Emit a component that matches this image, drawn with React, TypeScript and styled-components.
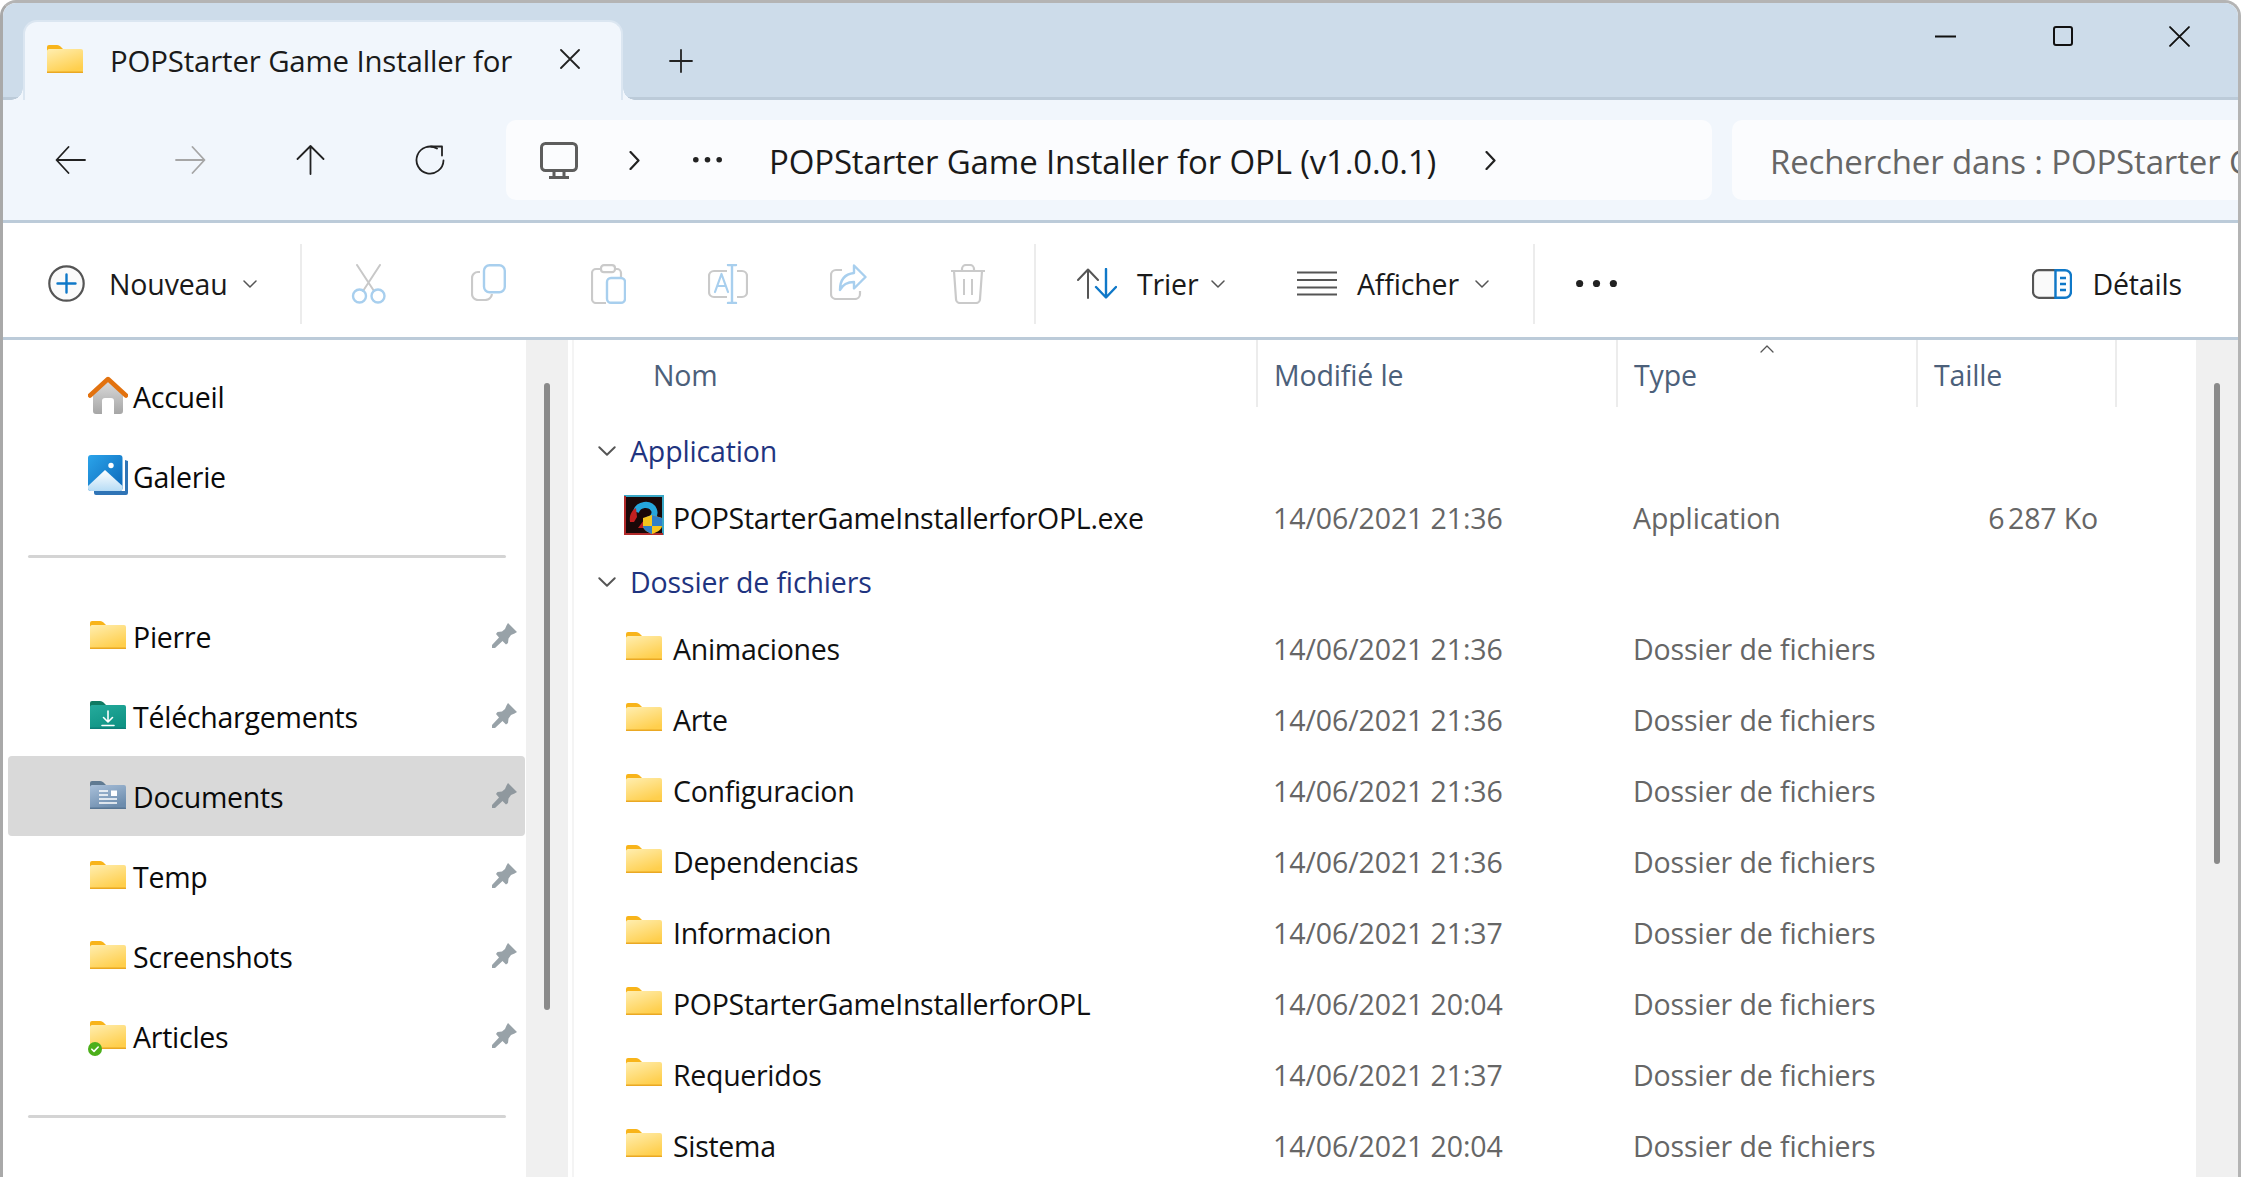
import { useId } from "react";
import styled, { createGlobalStyle } from "styled-components";

const GlobalStyle = createGlobalStyle`
  html, body {
    margin: 0;
    height: 100%;
    overflow: hidden;
    background: #fff;
  }
  body {
    font-family: "Open Sans", "Noto Sans", "Liberation Sans", sans-serif;
    font-size: 28.5px;
    letter-spacing: -0.15px;
    color: #111;
  }
  svg { display: block; flex-shrink: 0; }
`;

const Window = styled.div`
  position: relative;
  box-sizing: border-box;
  height: 100vh;
  display: flex;
  flex-direction: column;
  overflow: hidden;
  border: 3px solid #b4b4b4;
  border-bottom: none;
  border-left-color: #a9a9a9;
  border-radius: 16px 16px 0 0;
`;
const TopAccent = styled.div`
  position: absolute;
  top: -3px;
  left: 30px;
  width: 264px;
  height: 3px;
  background: #9e9e9e;
`;
const TitleBar = styled.div`
  box-sizing: border-box;
  flex: none;
  height: 97px;
  display: flex;
  align-items: flex-end;
  padding-left: 20px;
  background: #cddcea;
  border-bottom: 3px solid #bccbd9;
`;
const Tab = styled.div`
  position: relative;
  box-sizing: border-box;
  width: 600px;
  height: 80px;
  margin-bottom: -3px;
  display: flex;
  align-items: center;
  padding-left: 22px;
  background: #f1f6fc;
  border: 2px solid #dbe6f1;
  border-bottom: none;
  border-radius: 14px 14px 0 0;
  &::before,
  &::after {
    content: "";
    position: absolute;
    bottom: 0;
    width: 12px;
    height: 12px;
  }
  &::before {
    left: -14px;
    background: radial-gradient(circle at 0 0, transparent 11.5px, #f1f6fc 12px);
  }
  &::after {
    right: -14px;
    background: radial-gradient(circle at 100% 0, transparent 11.5px, #f1f6fc 12px);
  }
`;
const TabFolder = styled.div`
  margin-bottom: 4px;
`;
const TabTitle = styled.span`
  margin-left: 27px;
  width: 430px;
  font-size: 29.4px;
  white-space: nowrap;
  overflow: hidden;
  color: #1a1a1a;
`;
const TabClose = styled.span`
  margin-left: 20px;
  margin-top: -4px;
`;
const NewTab = styled.div`
  margin: 0 0 24px 46px;
`;
const WindowControls = styled.div`
  margin-left: auto;
  align-self: flex-start;
  display: flex;
  height: 66px;
  align-items: center;
`;
const ControlSlot = styled.div`
  width: 117px;
  display: flex;
  justify-content: center;
`;

const NavBar = styled.div`
  box-sizing: border-box;
  flex: none;
  height: 123px;
  display: flex;
  align-items: center;
  padding-left: 7px;
  background: #f1f6fc;
  border-bottom: 3px solid #bccbd9;
`;
const NavButton = styled.div`
  width: 120px;
  display: flex;
  justify-content: center;
`;
const AddressBox = styled.div`
  box-sizing: border-box;
  width: 1206px;
  height: 80px;
  margin-left: 16px;
  display: flex;
  align-items: center;
  padding-left: 34px;
  background: #fbfcfe;
  border-radius: 10px;
`;
const CrumbChevron = styled.div`
  margin: 0 53px 0 51px;
`;
const PathText = styled.span`
  margin-left: 47px;
  width: 716px;
  font-size: 33px;
  padding-top: 2px;
  white-space: nowrap;
  color: #1a1a1a;
`;
const SearchBox = styled.div`
  flex: 1;
  min-width: 0;
  height: 80px;
  margin-left: 20px;
  display: flex;
  align-items: center;
  padding: 2px 0 0 38px;
  box-sizing: border-box;
  font-size: 33px;
  overflow: hidden;
  white-space: nowrap;
  color: #666;
  background: #fbfcfe;
  border-radius: 10px 0 0 10px;
`;

const Toolbar = styled.div`
  box-sizing: border-box;
  flex: none;
  height: 117px;
  display: flex;
  align-items: center;
  padding: 7px 56px 0 45px;
  background: #fff;
  border-bottom: 3px solid #bccbd9;
`;
const ToolButton = styled.div<{ $w: number; $gap: number; $ml?: number }>`
  width: ${(p) => p.$w}px;
  margin-left: ${(p) => p.$ml ?? 0}px;
  display: flex;
  align-items: center;
  gap: ${(p) => p.$gap}px;
  color: #1a1a1a;
`;
const ToolLabel = styled.span<{ $w: number }>`
  width: ${(p) => p.$w}px;
  white-space: nowrap;
`;
const ToolDivider = styled.div<{ $ml?: number }>`
  flex: none;
  width: 2px;
  height: 80px;
  margin-left: ${(p) => p.$ml ?? 0}px;
  background: #ececec;
`;
const IconGroup = styled.div`
  display: flex;
  margin: 0 6px;
`;
const IconButton = styled.div`
  width: 120px;
  display: flex;
  justify-content: center;
`;
const MoreDots = styled.div`
  margin-left: 41px;
`;
const DetailsButton = styled.div`
  margin-left: auto;
  display: flex;
  align-items: center;
  gap: 20px;
  color: #1a1a1a;
`;

const Body = styled.div`
  flex: 1;
  min-height: 0;
  display: flex;
`;
const Sidebar = styled.nav`
  box-sizing: border-box;
  flex: none;
  width: 523px;
  padding-top: 16px;
`;
const SideRow = styled.div<{ $selected?: boolean }>`
  position: relative;
  box-sizing: border-box;
  height: 80px;
  margin: 0 1px 0 5px;
  padding: 0 8px 0 80px;
  display: flex;
  align-items: center;
  border-radius: 4px;
  color: #0a0a0a;
  background: ${(p) => (p.$selected ? "#d9d9d9" : "transparent")};
`;
const SideIcon = styled.div`
  position: relative;
  width: 40px;
  margin-bottom: 3px;
  display: flex;
  justify-content: center;
`;
const SideLabel = styled.span`
  margin-left: 5px;
  padding-top: 1px;
  letter-spacing: -0.25px;
`;
const PinSlot = styled.div`
  margin-left: auto;
  margin-bottom: 1px;
`;
const SyncBadge = styled.div`
  position: absolute;
  left: 0;
  bottom: -7px;
`;
const Separator = styled.div`
  height: 80px;
  display: flex;
  align-items: center;
  &::after {
    content: "";
    width: 478px;
    height: 3px;
    margin-left: 25px;
    background: #d4d4d4;
    border-radius: 2px;
  }
`;
const ScrollTrack = styled.div`
  flex: none;
  width: 42px;
  background: #f0f0f0;
`;
const ScrollThumb = styled.div<{ $h: number }>`
  width: 6px;
  height: ${(p) => p.$h}px;
  margin: 43px 0 0 18px;
  background: #8a8a8a;
  border-radius: 3px;
`;
const PaneGap = styled.div`
  flex: none;
  width: 6px;
  border-right: 2px solid #f4f4f4;
  box-sizing: border-box;
`;
const FilePane = styled.main`
  flex: 1;
  min-width: 0;
  overflow: hidden;
`;
const Columns = "684px 360px 300px 199px";
const HeaderRow = styled.div`
  display: grid;
  grid-template-columns: ${Columns};
  height: 67px;
  margin-bottom: 13px;
`;
const HeaderCell = styled.div<{ $first?: boolean }>`
  position: relative;
  display: flex;
  align-items: center;
  padding: 3px 0 0 ${(p) => (p.$first ? "79px" : "16px")};
  color: #4c607a;
  border-right: 2px solid #ececec;
`;
const SortCaret = styled.div`
  position: absolute;
  top: 5px;
  left: 142px;
`;
const GroupRow = styled.div<{ $h: number; $pb?: number }>`
  box-sizing: border-box;
  height: ${(p) => p.$h}px;
  display: flex;
  align-items: center;
  padding: 0 0 ${(p) => p.$pb ?? 0}px 24px;
  color: #1f3480;
`;
const GroupLabel = styled.span`
  margin-left: 14px;
`;
const FileRow = styled.div`
  display: grid;
  grid-template-columns: ${Columns};
  height: 71px;
  align-items: center;
  color: #666;
`;
const NameCell = styled.div`
  display: flex;
  align-items: center;
  padding-left: 50px;
  color: #111;
`;
const FileIcon = styled.div`
  width: 40px;
  margin-bottom: 5px;
  display: flex;
  justify-content: center;
`;
const FileName = styled.span`
  margin-left: 9px;
  letter-spacing: -0.3px;
  white-space: nowrap;
`;
const MetaCell = styled.div`
  padding-left: 15px;
  white-space: nowrap;
  letter-spacing: -0.1px;
`;
const SizeCell = styled.div`
  text-align: right;
  padding-right: 19px;
  white-space: nowrap;
`;

const line = { fill: "none", strokeLinecap: "round", strokeLinejoin: "round" } as const;

const FolderIcon = ({ kind = "plain" }: { kind?: "plain" | "download" | "docs" }) => {
  const id = useId();
  const palette = {
    plain: { tab: "#f8b41a", top: "#ffeeb0", bottom: "#ffcf4d", edge: "#eaa823" },
    download: { tab: "#0f7a62", top: "#25ab9c", bottom: "#0f9384", edge: "#0d7f78" },
    docs: { tab: "#5f7a92", top: "#a9c0da", bottom: "#6c8cad", edge: "#587694" },
  }[kind];
  return (
    <svg width="36" height="28" viewBox="0 0 36 28">
      <defs>
        <linearGradient id={id} x1="0" y1="0" x2="0.5" y2="1">
          <stop offset="0" stopColor={palette.top} />
          <stop offset="1" stopColor={palette.bottom} />
        </linearGradient>
      </defs>
      <path d="M0 2a2 2 0 0 1 2-2h8c2 0 3 1 4 2l2 2v3H0z" fill={palette.tab} />
      <path d="M0 6c0-1 1-2 2-2h32a2 2 0 0 1 2 2v20a2 2 0 0 1-2 2H1a1 1 0 0 1-1-1z" fill={`url(#${id})`} />
      <path d="M0 27.300h36" stroke={palette.edge} strokeWidth="1.400" />
      {kind === "download" && (
        <path d="M18 10v11M13.500 16.500L18 21l4.500-4.500M12 24.500h12" stroke="#fff" strokeWidth="1.600" {...line} />
      )}
      {kind === "docs" && (
        <g stroke="#fff" strokeWidth="1.600">
          <path d="M9 10h9M9 14h9M9 18h18M9 22h18" />
          <rect x="21" y="9.500" width="6" height="5.500" fill="#fff" strokeWidth="0" />
        </g>
      )}
    </svg>
  );
};

const HomeIcon = () => {
  const id = useId();
  return (
    <svg width="40" height="38" viewBox="0 0 40 38">
      <defs>
        <linearGradient id={id} x1="0" y1="0" x2="0" y2="1">
          <stop offset="0" stopColor="#dcdcdc" />
          <stop offset="1" stopColor="#a6a6a6" />
        </linearGradient>
      </defs>
      <path
        d="M5 17L20 4l15 13v18a3 3 0 0 1-3 3h-6V25a3 3 0 0 0-3-3h-6a3 3 0 0 0-3 3v13H8a3 3 0 0 1-3-3z"
        fill={`url(#${id})`}
      />
      <path d="M2 19.500L20 3l18 16.500" stroke="#e2720f" strokeWidth="4.500" {...line} />
    </svg>
  );
};

const GalleryIcon = () => {
  const id = useId();
  const snow = useId();
  return (
    <svg width="40" height="40" viewBox="0 0 40 40">
      <defs>
        <linearGradient id={id} x1="0" y1="0" x2="1" y2="1">
          <stop offset="0" stopColor="#2ba4ea" />
          <stop offset="1" stopColor="#0b66b8" />
        </linearGradient>
        <linearGradient id={snow} x1="0" y1="0" x2="0" y2="1">
          <stop offset="0" stopColor="#fff" />
          <stop offset="1" stopColor="#b7dcf5" />
        </linearGradient>
      </defs>
      <path d="M6 38a2 2 0 0 0 2 2h30a2 2 0 0 0 2-2V6l-3-1v31H6z" fill="#2f74b6" />
      <rect x="0" y="0" width="34.500" height="36" rx="3" fill={`url(#${id})`} />
      <path d="M0 31L17 15l17.500 16v2a3 3 0 0 1-3 3H3a3 3 0 0 1-3-3z" fill={`url(#${snow})`} />
      <circle cx="23" cy="10.500" r="2.700" fill="#fff" />
    </svg>
  );
};

const PinIcon = ({ color = "#98a2a8" }: { color?: string }) => (
  <svg width="25" height="25" viewBox="0 0 25 25">
    <path
      d="M16 0L25 9L22.500 10.500L19 12L16.500 15.500L16 20L14 21.500L10.500 18L3 25H0V22L7 14.500L4 11L5.500 9L10 8.500L13 6L14.500 2.500Z"
      fill={color}
    />
  </svg>
);

const Chevron = ({ w = 14, h = 8, color = "#555" }: { w?: number; h?: number; color?: string }) => (
  <svg width={w} height={h} viewBox="0 0 14 8" preserveAspectRatio="none">
    <path d="M1 1l6 6 6-6" stroke={color} strokeWidth="1.500" {...line} />
  </svg>
);

const BreadChevron = () => (
  <svg width="11" height="19" viewBox="0 0 11 19">
    <path d="M1.500 1L9.500 9.500 1.500 18" stroke="#222" strokeWidth="2.200" {...line} />
  </svg>
);

const CloseX = ({ size = 20, color = "#222" }: { size?: number; color?: string }) => (
  <svg width={size} height={size} viewBox="0 0 20 20">
    <path d="M1 1l18 18M19 1L1 19" stroke={color} strokeWidth="1.800" {...line} />
  </svg>
);

const ArrowBack = ({ color = "#222" }: { color?: string }) => (
  <svg width="31" height="28" viewBox="0 0 31 28">
    <path d="M30 14H2M13.500 1L1.500 14l12 13" stroke={color} strokeWidth="1.800" {...line} />
  </svg>
);
const ArrowForward = ({ color = "#a6a6a6" }: { color?: string }) => (
  <svg width="31" height="28" viewBox="0 0 31 28">
    <path d="M1 14h28M17.500 1l12 13-12 13" stroke={color} strokeWidth="1.800" {...line} />
  </svg>
);
const ArrowUp = () => (
  <svg width="29" height="30" viewBox="0 0 29 30">
    <path d="M14.500 29V2M1.500 14L14.500 1l13 13" stroke="#222" strokeWidth="1.800" {...line} />
  </svg>
);
const RefreshIcon = () => (
  <svg width="30" height="30" viewBox="0 0 30 30">
    <path d="M22 3.500A13.500 13.500 0 1 0 28.500 15.500" stroke="#222" strokeWidth="1.800" {...line} />
    <path d="M16 1.500h11v9" stroke="#222" strokeWidth="1.800" {...line} />
  </svg>
);
const MonitorIcon = () => (
  <svg width="38" height="37" viewBox="0 0 38 37">
    <rect x="1.500" y="1.500" width="35" height="27" rx="4" fill="#fbfcfe" stroke="#5d5d5d" strokeWidth="3" />
    <path d="M14 29v6M24 29v6M9 35.500h20" stroke="#5d5d5d" strokeWidth="3" />
  </svg>
);
const DotsIcon = ({ w, r }: { w: number; r: number }) => (
  <svg width={w} height={r * 2} viewBox={`0 0 ${w} ${r * 2}`}>
    <circle cx={r} cy={r} r={r} fill="#222" />
    <circle cx={w / 2} cy={r} r={r} fill="#222" />
    <circle cx={w - r} cy={r} r={r} fill="#222" />
  </svg>
);

const NewIcon = () => (
  <svg width="37" height="37" viewBox="0 0 37 37">
    <circle cx="18.500" cy="18.500" r="17.200" fill="#fafafa" stroke="#555" strokeWidth="2.200" />
    <path d="M18.500 9.500v18M9.500 18.500h18" stroke="#0f78c8" strokeWidth="2.400" {...line} />
  </svg>
);
const CutIcon = () => (
  <svg width="35" height="40" viewBox="0 0 35 40">
    <path d="M6 1l17 26M29 1L12 27" stroke="#c8c8c8" strokeWidth="2" {...line} />
    <circle cx="8.500" cy="32" r="6.500" fill="none" stroke="#a8cfee" strokeWidth="2.400" />
    <circle cx="27" cy="32" r="6.500" fill="none" stroke="#a8cfee" strokeWidth="2.400" />
  </svg>
);
const CopyIcon = () => (
  <svg width="35" height="37" viewBox="0 0 35 37">
    <path d="M9 8H7a6 6 0 0 0-6 6v16a6 6 0 0 0 6 6h7a7 7 0 0 0 7-6" fill="none" stroke="#cacaca" strokeWidth="2.200" />
    <rect x="13" y="1.200" width="20.800" height="27" rx="5.500" fill="#fff" stroke="#a8cfee" strokeWidth="2.400" />
  </svg>
);
const PasteIcon = () => (
  <svg width="35" height="40" viewBox="0 0 35 40">
    <path d="M10 5H5a4 4 0 0 0-4 4v26a4 4 0 0 0 4 4h10M24 5h2a4 4 0 0 1 4 4v4" fill="none" stroke="#cacaca" strokeWidth="2.200" />
    <rect x="10" y="1.200" width="14" height="7" rx="3" fill="#fff" stroke="#cacaca" strokeWidth="2.200" />
    <rect x="16" y="14" width="18" height="24.800" rx="4" fill="#fff" stroke="#a8cfee" strokeWidth="2.400" />
  </svg>
);
const RenameIcon = () => (
  <svg width="40" height="40" viewBox="0 0 40 40">
    <path d="M19 7H6a5 5 0 0 0-5 5v16a5 5 0 0 0 5 5h13M29 7h5a5 5 0 0 1 5 5v16a5 5 0 0 1-5 5h-5" fill="none" stroke="#cacaca" strokeWidth="2.200" />
    <path d="M20 1h8M24 1v38M20 39h8" stroke="#a8cfee" strokeWidth="2.400" {...line} />
    <path d="M7 28l6.500-18L20 28M9.500 22h8" stroke="#a8cfee" strokeWidth="2.200" {...line} />
  </svg>
);
const ShareIcon = () => (
  <svg width="37" height="36" viewBox="0 0 37 36">
    <path d="M12 6H6a5 5 0 0 0-5 5v19a5 5 0 0 0 5 5h19a5 5 0 0 0 5-5v-3" fill="none" stroke="#cacaca" strokeWidth="2.200" />
    <path
      d="M24 1.500L35.500 13 24 24.500V18c-7 0-11 2-14 8 0-10 5-16 14-17z"
      fill="#fff"
      stroke="#a8cfee"
      strokeWidth="2.400"
      strokeLinejoin="round"
    />
  </svg>
);
const TrashIcon = () => (
  <svg width="36" height="40" viewBox="0 0 36 40">
    <path d="M1 7h34M12 7V5a4 4 0 0 1 4-4h4a4 4 0 0 1 4 4v2" fill="none" stroke="#cacaca" strokeWidth="2.200" />
    <path d="M4 7l2 28a4 4 0 0 0 4 4h16a4 4 0 0 0 4-4l2-28" fill="none" stroke="#cacaca" strokeWidth="2.200" />
    <path d="M14 15v16M22 15v16" stroke="#cacaca" strokeWidth="2" />
  </svg>
);
const SortIcon = () => (
  <svg width="40" height="31" viewBox="0 0 40 31">
    <path d="M11 30V2M1 12L11 1.500 21 12" stroke="#555" strokeWidth="2" {...line} />
    <path d="M29 1v28M19 19l10 10.500L39 19" stroke="#0f78c8" strokeWidth="2.400" {...line} />
  </svg>
);
const ViewIcon = () => (
  <svg width="40" height="25" viewBox="0 0 40 25">
    <path d="M0 1.500h40M0 9h40M0 16.500h40M0 23.500h40" stroke="#555" strokeWidth="2" />
  </svg>
);
const DetailsIcon = () => (
  <svg width="40" height="30" viewBox="0 0 40 30">
    <path d="M24 1.200H7a6 6 0 0 0-6 6v15.600a6 6 0 0 0 6 6h17z" fill="#fafafa" stroke="#555" strokeWidth="2.200" />
    <path d="M23.500 1.200H33a6 6 0 0 1 6 6v15.600a6 6 0 0 1-6 6h-9.500z" fill="#fff" stroke="#0f78c8" strokeWidth="2.400" />
    <path d="M28 9h6M28 15h6M28 21h6" stroke="#0f78c8" strokeWidth="2.400" />
  </svg>
);
const ExeIcon = () => (
  <svg width="40" height="40" viewBox="0 0 40 40">
    <rect width="40" height="40" fill="#1a0808" />
    <path d="M0 1h39v39" fill="none" stroke="#39a7c6" strokeWidth="2" />
    <path d="M1 1v38h38" fill="none" stroke="#b12a2a" strokeWidth="2" />
    <path d="M12 17c2-8 14-10 18-2 2 5-2 9-7 10" fill="none" stroke="#25a6dc" strokeWidth="6" />
    <path d="M6 27c-1-6 1-11 6-14l1 9-3 5zM14 33l6-8 6 8z" fill="#c32020" />
    <path d="M28 20l10 3v8c0 3-4 6-10 8-5-2-9-5-9-8v-8z" fill="#f4c51e" />
    <path d="M28 20l10 3v8H28zM28 31v8c-5-2-9-5-9-8z" fill="#2f7fc7" />
  </svg>
);
const SyncCheck = () => (
  <svg width="14" height="14" viewBox="0 0 14 14">
    <circle cx="7" cy="7" r="7" fill="#4caf1a" />
    <path d="M3.800 7.200l2.200 2.200 4.200-4.400" stroke="#fff" strokeWidth="1.600" {...line} />
  </svg>
);

const pinned: { label: string; kind?: "download" | "docs"; selected?: boolean; synced?: boolean }[] = [
  { label: "Pierre" },
  { label: "Téléchargements", kind: "download" },
  { label: "Documents", kind: "docs", selected: true },
  { label: "Temp" },
  { label: "Screenshots" },
  { label: "Articles", synced: true },
];

const folders = [
  ["Animaciones", "14/06/2021 21:36"],
  ["Arte", "14/06/2021 21:36"],
  ["Configuracion", "14/06/2021 21:36"],
  ["Dependencias", "14/06/2021 21:36"],
  ["Informacion", "14/06/2021 21:37"],
  ["POPStarterGameInstallerforOPL", "14/06/2021 20:04"],
  ["Requeridos", "14/06/2021 21:37"],
  ["Sistema", "14/06/2021 20:04"],
];

export default function App() {
  return (
    <>
      <GlobalStyle />
      <Window>
        <TopAccent />
        <TitleBar>
          <Tab>
            <TabFolder>
              <FolderIcon />
            </TabFolder>
            <TabTitle>POPStarter Game Installer for</TabTitle>
            <TabClose>
              <CloseX />
            </TabClose>
          </Tab>
          <NewTab>
            <svg width="24" height="24" viewBox="0 0 24 24">
              <path d="M12 1v22M1 12h22" stroke="#222" strokeWidth="1.800" {...line} />
            </svg>
          </NewTab>
          <WindowControls>
            <ControlSlot>
              <svg width="21" height="3" viewBox="0 0 21 3">
                <path d="M0 1.500h21" stroke="#111" strokeWidth="2.200" />
              </svg>
            </ControlSlot>
            <ControlSlot>
              <svg width="20" height="20" viewBox="0 0 20 20">
                <rect x="1" y="1" width="18" height="18" rx="2" fill="none" stroke="#111" strokeWidth="2" />
              </svg>
            </ControlSlot>
            <ControlSlot>
              <CloseX size={21} color="#111" />
            </ControlSlot>
          </WindowControls>
        </TitleBar>
        <NavBar>
          <NavButton>
            <ArrowBack />
          </NavButton>
          <NavButton>
            <ArrowForward />
          </NavButton>
          <NavButton>
            <ArrowUp />
          </NavButton>
          <NavButton>
            <RefreshIcon />
          </NavButton>
          <AddressBox>
            <MonitorIcon />
            <CrumbChevron>
              <BreadChevron />
            </CrumbChevron>
            <DotsIcon w={29} r={2.8} />
            <PathText>POPStarter Game Installer for OPL (v1.0.0.1)</PathText>
            <BreadChevron />
          </AddressBox>
          <SearchBox>Rechercher dans : POPStarter Game Installer for OPL (v1.0.0.1)</SearchBox>
        </NavBar>
        <Toolbar>
          <ToolButton $w={252} $gap={24}>
            <NewIcon />
            <ToolLabel $w={110}>Nouveau</ToolLabel>
            <Chevron />
          </ToolButton>
          <ToolDivider />
          <IconGroup>
            <IconButton>
              <CutIcon />
            </IconButton>
            <IconButton>
              <CopyIcon />
            </IconButton>
            <IconButton>
              <PasteIcon />
            </IconButton>
            <IconButton>
              <RenameIcon />
            </IconButton>
            <IconButton>
              <ShareIcon />
            </IconButton>
            <IconButton>
              <TrashIcon />
            </IconButton>
          </IconGroup>
          <ToolDivider />
          <ToolButton $w={147} $gap={20} $ml={41}>
            <SortIcon />
            <ToolLabel $w={54}>Trier</ToolLabel>
            <Chevron />
          </ToolButton>
          <ToolButton $w={193} $gap={20} $ml={73}>
            <ViewIcon />
            <ToolLabel $w={98}>Afficher</ToolLabel>
            <Chevron />
          </ToolButton>
          <ToolDivider $ml={43} />
          <MoreDots>
            <DotsIcon w={41} r={3.6} />
          </MoreDots>
          <DetailsButton>
            <DetailsIcon />
            Détails
          </DetailsButton>
        </Toolbar>
        <Body>
          <Sidebar>
            <SideRow>
              <SideIcon>
                <HomeIcon />
              </SideIcon>
              <SideLabel>Accueil</SideLabel>
            </SideRow>
            <SideRow>
              <SideIcon>
                <GalleryIcon />
              </SideIcon>
              <SideLabel>Galerie</SideLabel>
            </SideRow>
            <Separator />
            {pinned.map((item) => (
              <SideRow key={item.label} $selected={item.selected}>
                <SideIcon>
                  <FolderIcon kind={item.kind} />
                  {item.synced && (
                    <SyncBadge>
                      <SyncCheck />
                    </SyncBadge>
                  )}
                </SideIcon>
                <SideLabel>{item.label}</SideLabel>
                <PinSlot>
                  <PinIcon color={item.selected ? "#8f989e" : undefined} />
                </PinSlot>
              </SideRow>
            ))}
            <Separator />
          </Sidebar>
          <ScrollTrack>
            <ScrollThumb $h={627} />
          </ScrollTrack>
          <PaneGap />
          <FilePane>
            <HeaderRow>
              <HeaderCell $first>Nom</HeaderCell>
              <HeaderCell>Modifié le</HeaderCell>
              <HeaderCell>
                Type
                <SortCaret>
                  <svg width="14" height="8" viewBox="0 0 14 8">
                    <path d="M1 7l6-6 6 6" stroke="#555" strokeWidth="1.300" {...line} />
                  </svg>
                </SortCaret>
              </HeaderCell>
              <HeaderCell>Taille</HeaderCell>
            </HeaderRow>
            <GroupRow $h={62}>
              <Chevron w={18} h={10} />
              <GroupLabel>Application</GroupLabel>
            </GroupRow>
            <FileRow>
              <NameCell>
                <FileIcon>
                  <ExeIcon />
                </FileIcon>
                <FileName>POPStarterGameInstallerforOPL.exe</FileName>
              </NameCell>
              <MetaCell>14/06/2021 21:36</MetaCell>
              <MetaCell>Application</MetaCell>
              <SizeCell>6{"\u202f"}287 Ko</SizeCell>
            </FileRow>
            <GroupRow $h={60} $pb={3}>
              <Chevron w={18} h={10} />
              <GroupLabel>Dossier de fichiers</GroupLabel>
            </GroupRow>
            {folders.map(([name, date]) => (
              <FileRow key={name}>
                <NameCell>
                  <FileIcon>
                    <FolderIcon />
                  </FileIcon>
                  <FileName>{name}</FileName>
                </NameCell>
                <MetaCell>{date}</MetaCell>
                <MetaCell>Dossier de fichiers</MetaCell>
              </FileRow>
            ))}
          </FilePane>
          <ScrollTrack>
            <ScrollThumb $h={481} />
          </ScrollTrack>
        </Body>
      </Window>
    </>
  );
}
